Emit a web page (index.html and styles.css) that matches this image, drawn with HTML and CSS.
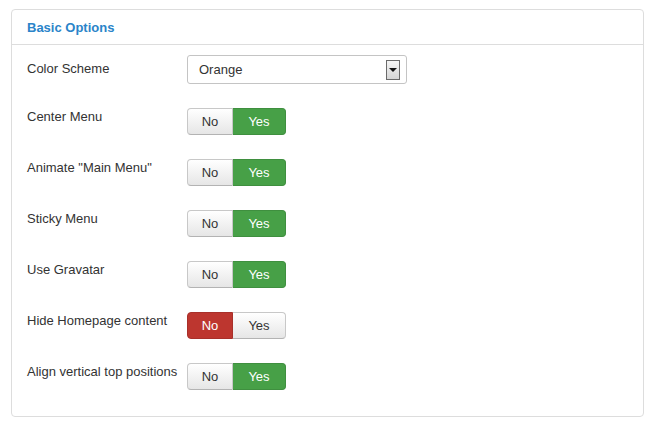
FILE: index.html
```html
<!DOCTYPE html>
<html>
<head>
<meta charset="utf-8">
<link rel="stylesheet" href="styles.css">
</head>
<body>
<div class="panel">
  <div class="panel-head">Basic Options</div>
  <div class="panel-body">
    <div class="row row-select">
      <div class="label label-select">Color Scheme</div>
      <div class="select">
        <span class="select-text">Orange</span>
        <span class="select-arrow"><span class="tri"></span></span>
      </div>
    </div>
    <div class="row">
      <div class="label">Center Menu</div>
      <div class="toggle"><span class="btn btn-no">No</span><span class="btn btn-yes on-yes">Yes</span></div>
    </div>
    <div class="row">
      <div class="label">Animate "Main Menu"</div>
      <div class="toggle"><span class="btn btn-no">No</span><span class="btn btn-yes on-yes">Yes</span></div>
    </div>
    <div class="row">
      <div class="label">Sticky Menu</div>
      <div class="toggle"><span class="btn btn-no">No</span><span class="btn btn-yes on-yes">Yes</span></div>
    </div>
    <div class="row">
      <div class="label">Use Gravatar</div>
      <div class="toggle"><span class="btn btn-no">No</span><span class="btn btn-yes on-yes">Yes</span></div>
    </div>
    <div class="row">
      <div class="label">Hide Homepage content</div>
      <div class="toggle"><span class="btn btn-no on-no">No</span><span class="btn btn-yes">Yes</span></div>
    </div>
    <div class="row">
      <div class="label">Align vertical top positions</div>
      <div class="toggle"><span class="btn btn-no">No</span><span class="btn btn-yes on-yes">Yes</span></div>
    </div>
  </div>
</div>
</body>
</html>
```
FILE: styles.css
```css
html, body {
  margin: 0;
  padding: 0;
  background: #ffffff;
}
body {
  font-family: "Liberation Sans", Arial, sans-serif;
  font-size: 13px;
  color: #333333;
  padding: 9px 0 0 11px;
}
.panel {
  width: 631px;
  height: 406px;
  border: 1px solid #dddddd;
  border-radius: 4px;
  box-sizing: content-box;
}
.panel-head {
  height: 34px;
  line-height: 36px;
  padding-left: 15px;
  border-bottom: 1px solid #dddddd;
  color: #2a84c9;
  font-weight: bold;
  font-size: 13px;
}
.panel-body {
  padding: 10px 15px 0 15px;
  display: flex;
  flex-direction: column;
  gap: 24px;
}
.row {
  display: flex;
  align-items: flex-start;
}
.label {
  width: 160px;
  line-height: 18px;
  padding-top: 0;
}
.label-select {
  padding-top: 5px;
}
.select {
  height: 27px;
  border: 1px solid #c4c4c4;
  border-radius: 3px;
  display: flex;
  align-items: center;
  justify-content: space-between;
  padding-left: 11px;
  padding-right: 6px;
  box-sizing: content-box;
  width: 201px;
}
.select-text {
  color: #333;
}
.select-arrow {
  width: 12px;
  height: 18px;
  border: 1px solid #6a6a6a;
  background: linear-gradient(#f4f4f4, #d6d6d6);
  display: flex;
  align-items: center;
  justify-content: center;
}
.tri {
  width: 0;
  height: 0;
  border-left: 4px solid transparent;
  border-right: 4px solid transparent;
  border-top: 4px solid #111;
}
.toggle {
  display: flex;
  height: 27px;
}
.btn {
  display: flex;
  align-items: center;
  justify-content: center;
  height: 25px;
  border: 1px solid #c8c8c8;
  border-bottom-color: #b3b3b3;
  background: linear-gradient(#ffffff, #e6e6e6);
  color: #333;
  font-size: 13px;
}
.btn-no {
  width: 44px;
  border-radius: 4px 0 0 4px;
}
.btn-yes {
  width: 52px;
  border-left: none;
  border-radius: 0 4px 4px 0;
}
.on-yes {
  background: #47a047;
  border-color: #3f8f3f;
  color: #ffffff;
}
.on-no {
  background: #bd362f;
  border-color: #a8302a;
  color: #ffffff;
}
```
